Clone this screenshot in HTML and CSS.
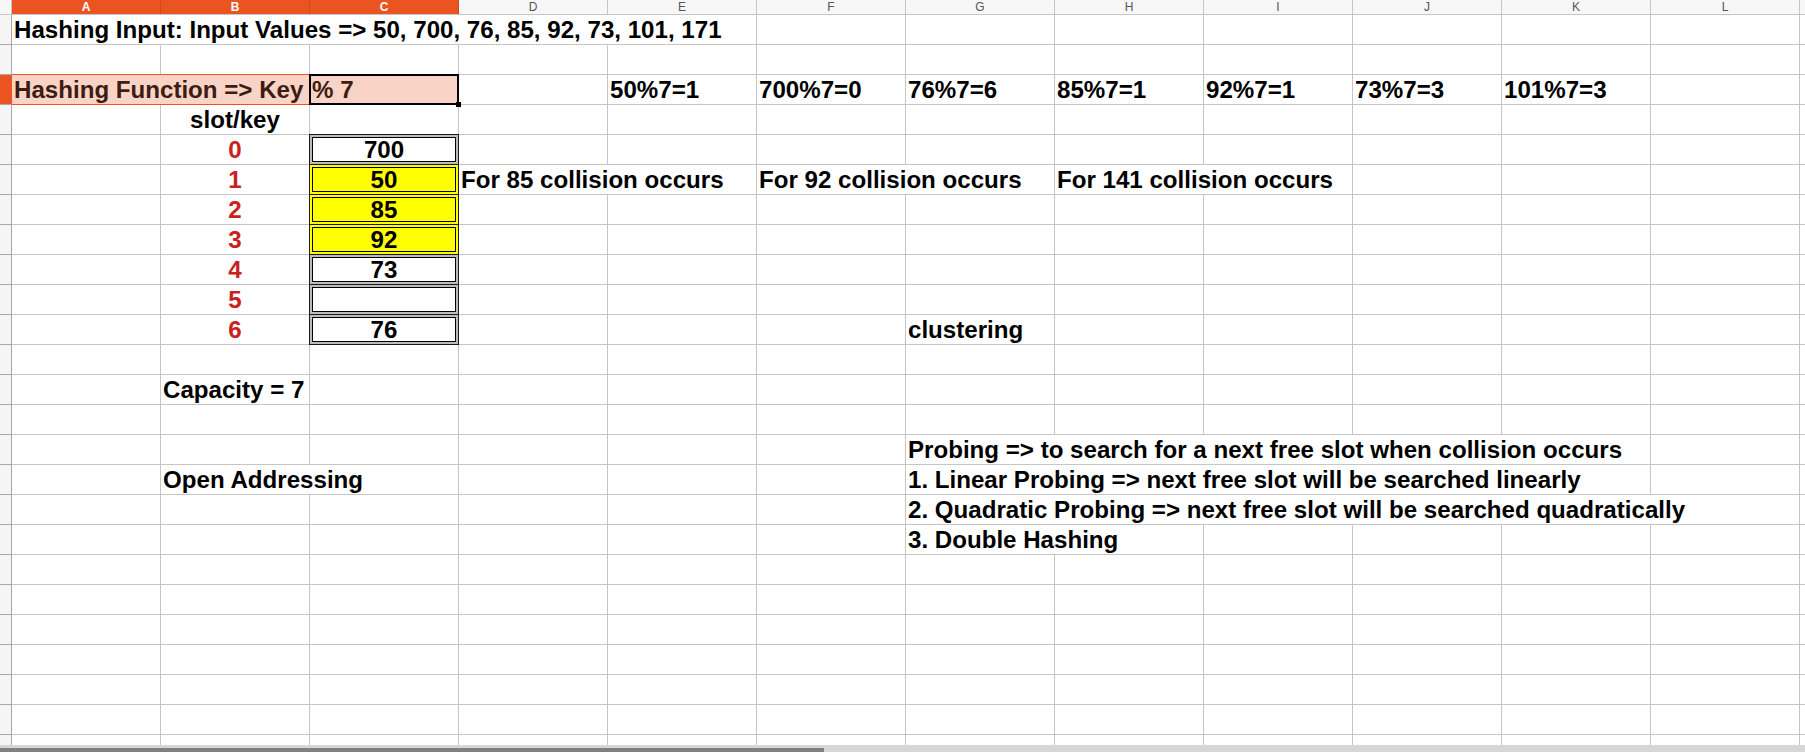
FILE: index.html
```html
<!DOCTYPE html>
<html lang="en">
<head>
<meta charset="utf-8">
<title>Hashing sheet</title>
<link rel="stylesheet" href="styles.css">
</head>
<body>
<div class="sheet">
  <div class="row hdr">
    <div class="corner"></div>
    <div class="ch on">A</div><div class="ch on">B</div><div class="ch on">C</div>
    <div class="ch">D</div><div class="ch">E</div><div class="ch">F</div><div class="ch">G</div>
    <div class="ch">H</div><div class="ch">I</div><div class="ch">J</div><div class="ch">K</div>
    <div class="ch">L</div><div class="ch"></div>
  </div>
  <div class="row">
    <div class="rh"></div>
    <div class="cell s5">Hashing Input: Input Values =&gt; 50, 700, 76, 85, 92, 73, 101, 171</div>
    <div></div><div></div><div></div><div></div><div></div><div></div><div></div><div></div>
  </div>
  <div class="row">
    <div class="rh"></div>
    <div></div><div></div><div></div><div></div><div></div><div></div><div></div><div></div><div></div><div></div><div></div><div></div><div></div>
  </div>
  <div class="row">
    <div class="rh on"></div>
    <div class="cell s2 sel">Hashing Function =&gt; Key</div>
    <div class="cell cursor">% 7</div>
    <div></div>
    <div class="cell">50%7=1</div>
    <div class="cell">700%7=0</div>
    <div class="cell">76%7=6</div>
    <div class="cell">85%7=1</div>
    <div class="cell">92%7=1</div>
    <div class="cell">73%7=3</div>
    <div class="cell">101%7=3</div>
    <div></div><div></div>
  </div>
  <div class="row">
    <div class="rh"></div>
    <div></div>
    <div class="cell c">slot/key</div>
    <div></div><div></div><div></div><div></div><div></div><div></div><div></div><div></div><div></div><div></div><div></div>
  </div>
  <div class="row">
    <div class="rh"></div>
    <div></div>
    <div class="cell c red">0</div>
    <div class="cell c tb">700</div>
    <div></div><div></div><div></div><div></div><div></div><div></div><div></div><div></div><div></div><div></div>
  </div>
  <div class="row">
    <div class="rh"></div>
    <div></div>
    <div class="cell c red">1</div>
    <div class="cell c tb yl">50</div>
    <div class="cell s2">For 85 collision occurs</div>
    <div class="cell s2">For 92 collision occurs</div>
    <div class="cell s2">For 141 collision occurs</div>
    <div></div><div></div><div></div><div></div>
  </div>
  <div class="row">
    <div class="rh"></div>
    <div></div>
    <div class="cell c red">2</div>
    <div class="cell c tb yl">85</div>
    <div></div><div></div><div></div><div></div><div></div><div></div><div></div><div></div><div></div><div></div>
  </div>
  <div class="row">
    <div class="rh"></div>
    <div></div>
    <div class="cell c red">3</div>
    <div class="cell c tb yl">92</div>
    <div></div><div></div><div></div><div></div><div></div><div></div><div></div><div></div><div></div><div></div>
  </div>
  <div class="row">
    <div class="rh"></div>
    <div></div>
    <div class="cell c red">4</div>
    <div class="cell c tb">73</div>
    <div></div><div></div><div></div><div></div><div></div><div></div><div></div><div></div><div></div><div></div>
  </div>
  <div class="row">
    <div class="rh"></div>
    <div></div>
    <div class="cell c red">5</div>
    <div class="cell c tb"></div>
    <div></div><div></div><div></div><div></div><div></div><div></div><div></div><div></div><div></div><div></div>
  </div>
  <div class="row">
    <div class="rh"></div>
    <div></div>
    <div class="cell c red">6</div>
    <div class="cell c tb">76</div>
    <div></div><div></div><div></div>
    <div class="cell">clustering</div>
    <div></div><div></div><div></div><div></div><div></div><div></div>
  </div>
  <div class="row">
    <div class="rh"></div>
    <div></div><div></div><div></div><div></div><div></div><div></div><div></div><div></div><div></div><div></div><div></div><div></div><div></div>
  </div>
  <div class="row">
    <div class="rh"></div>
    <div></div>
    <div class="cell">Capacity = 7</div>
    <div></div><div></div><div></div><div></div><div></div><div></div><div></div><div></div><div></div><div></div><div></div>
  </div>
  <div class="row">
    <div class="rh"></div>
    <div></div><div></div><div></div><div></div><div></div><div></div><div></div><div></div><div></div><div></div><div></div><div></div><div></div>
  </div>
  <div class="row">
    <div class="rh"></div>
    <div></div><div></div><div></div><div></div><div></div><div></div>
    <div class="cell s5">Probing =&gt; to search for a next free slot when collision occurs</div>
    <div></div><div></div>
  </div>
  <div class="row">
    <div class="rh"></div>
    <div></div>
    <div class="cell s2">Open Addressing</div>
    <div></div><div></div><div></div>
    <div class="cell s5">1. Linear Probing =&gt; next free slot will be searched linearly</div>
    <div></div><div></div>
  </div>
  <div class="row">
    <div class="rh"></div>
    <div></div><div></div><div></div><div></div><div></div><div></div>
    <div class="cell s6">2. Quadratic Probing =&gt; next free slot will be searched quadratically</div>
    <div></div>
  </div>
  <div class="row">
    <div class="rh"></div>
    <div></div><div></div><div></div><div></div><div></div><div></div>
    <div class="cell s2">3. Double Hashing</div>
    <div></div><div></div><div></div><div></div><div></div>
  </div>
  <div class="row">
    <div class="rh"></div>
    <div></div><div></div><div></div><div></div><div></div><div></div><div></div><div></div><div></div><div></div><div></div><div></div><div></div>
  </div>
  <div class="row">
    <div class="rh"></div>
    <div></div><div></div><div></div><div></div><div></div><div></div><div></div><div></div><div></div><div></div><div></div><div></div><div></div>
  </div>
  <div class="row">
    <div class="rh"></div>
    <div></div><div></div><div></div><div></div><div></div><div></div><div></div><div></div><div></div><div></div><div></div><div></div><div></div>
  </div>
  <div class="row">
    <div class="rh"></div>
    <div></div><div></div><div></div><div></div><div></div><div></div><div></div><div></div><div></div><div></div><div></div><div></div><div></div>
  </div>
  <div class="row">
    <div class="rh"></div>
    <div></div><div></div><div></div><div></div><div></div><div></div><div></div><div></div><div></div><div></div><div></div><div></div><div></div>
  </div>
  <div class="row">
    <div class="rh"></div>
    <div></div><div></div><div></div><div></div><div></div><div></div><div></div><div></div><div></div><div></div><div></div><div></div><div></div>
  </div>
  <div class="row">
    <div class="rh"></div>
    <div></div><div></div><div></div><div></div><div></div><div></div><div></div><div></div><div></div><div></div><div></div><div></div><div></div>
  </div>
</div>
<div class="hscroll"><div class="thumb"></div></div>
</body>
</html>
```

FILE: styles.css
```css
html, body {
  margin: 0;
  padding: 0;
}

body {
  width: 1805px;
  height: 752px;
  overflow: hidden;
  background: #ffffff;
  font-family: "Liberation Sans", Arial, sans-serif;
}

.sheet {
  display: flex;
  flex-direction: column;
  gap: 1px;
  height: 745px;
  overflow: hidden;
  background: #c6c6c6;
}

.row {
  display: grid;
  grid-template-columns: 11px repeat(13, 148px);
  column-gap: 1px;
  height: 29px;
  flex: none;
}

.row > * {
  background: #ffffff;
}

.hdr {
  height: 14px;
}

.corner {
  background: #f7f7f7;
}

.row > .ch {
  background: #f7f7f7;
  color: #555555;
  font-size: 12px;
  line-height: 12px;
  padding-top: 1px;
  text-align: center;
}

.row > .ch.on {
  background: #e95420;
  color: #ffffff;
  font-weight: 700;
  box-shadow: 1px 0 0 #d24a1b;
}

.row > .rh {
  background: #f5f5f5;
  box-shadow: 1px 0 0 #a8a8a8, 0 1px 0 #a8a8a8, 1px 1px 0 #a8a8a8;
}

.row > .rh.on {
  background: #e95420;
}

.cell {
  font-size: 24.12px;
  font-weight: 700;
  line-height: 29px;
  padding-left: 2px;
  white-space: nowrap;
  color: #000000;
}

.c {
  text-align: center;
  padding-left: 0;
}

.red {
  color: #c9211e;
}

.s2 {
  grid-column: span 2;
}

.s5 {
  grid-column: span 5;
}

.s6 {
  grid-column: span 6;
}

.row > .sel {
  background: #f9d4c6;
  color: #3d1c12;
  position: relative;
  z-index: 1;
  box-shadow: 0 -1px 0 #e95420, 0 1px 0 #e95420, -1px 0 0 #e95420;
}

.row > .cursor {
  background: #f9d4c6;
  color: #3d1c12;
  position: relative;
  z-index: 2;
  box-shadow: 0 0 0 1px #000000, inset 0 0 0 1px #000000;
}

.cursor::after {
  content: "";
  position: absolute;
  right: -3px;
  bottom: -3px;
  width: 5px;
  height: 5px;
  background: #000000;
}

.row > .tb {
  position: relative;
  z-index: 1;
  box-shadow: 0 0 0 1px #1a1a1a, inset 0 0 0 2px #bdbdbd, inset 0 0 0 3px #000000;
}

.row > .tb.yl {
  background: #ffff00;
  box-shadow: 0 0 0 1px #1a1a1a, inset 0 0 0 2px #ffff00, inset 0 0 0 3px #000000;
}

.hscroll {
  height: 7px;
  background: #d6d6d6;
  display: flex;
  align-items: flex-end;
}

.thumb {
  width: 824px;
  height: 4px;
  background: #808080;
}
```
